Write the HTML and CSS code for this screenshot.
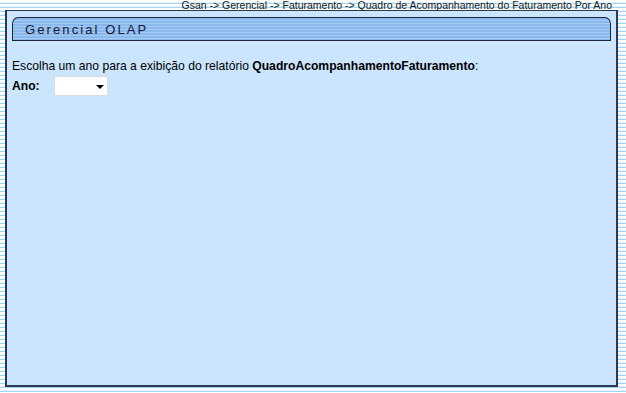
FILE: index.html
```html
<!DOCTYPE html>
<html lang="pt-BR">
<head>
    <meta charset="UTF-8">
    <title>Gerencial OLAP</title>
    <link rel="stylesheet" href="styles.css">
</head>
<body>
    <div class="breadcrumb">Gsan -&gt; Gerencial -&gt; Faturamento -&gt; Quadro de Acompanhamento do Faturamento Por Ano</div>

    <div class="panel">
        <div class="panel-title">Gerencial OLAP</div>

        <p class="intro">Escolha um ano para a exibição do relatório <strong>QuadroAcompanhamentoFaturamento</strong>:</p>

        <div class="form-row">
            <label for="ano">Ano:</label>
            <div class="select">
                <select id="ano">
                    <option value=""></option>
                </select>
                <span class="arrow"></span>
            </div>
        </div>
    </div>
</body>
</html>
```

FILE: styles.css
```css
:root {
    --panel-bg: #cbe5fe;
    --panel-border: #2b3a52;
    --text: #000000;
    --title-text: #14163a;
}

body {
    margin: 0;
    font-family: "Liberation Sans", Arial, sans-serif;
    font-size: 12.15px;
    color: var(--text);
    background: repeating-linear-gradient(
        to bottom,
        #ffffff 0,
        #ffffff 2px,
        #e4f3fb 2px,
        #e4f3fb 3px,
        #a3d6f2 3px,
        #a3d6f2 4px
    );
    height: 393px;
    overflow: hidden;
}

.breadcrumb {
    height: 10px;
    line-height: 10px;
    font-size: 10.5px;
    text-align: right;
    padding-right: 14px;
    color: #1a1a1a;
    white-space: nowrap;
}

.panel {
    box-sizing: border-box;
    margin: 0 8px 0 5px;
    height: 377px;
    border: 2px solid var(--panel-border);
    border-top-width: 1px;
    background: var(--panel-bg);
    padding: 6px 5px 0 5px;
}

.panel-title {
    height: 22px;
    line-height: 23px;
    border: 1px solid #1c2738;
    border-top-left-radius: 6px 7px;
    border-top-right-radius: 6px 7px;
    background: repeating-linear-gradient(
        to bottom,
        #88b8ec 0,
        #88b8ec 2px,
        #a6cbf3 2px,
        #a6cbf3 3px
    );
    padding-left: 12px;
    font-size: 13px;
    letter-spacing: 2.1px;
    color: var(--title-text);
}

.intro {
    margin: 18px 0 0 0;
    line-height: 14px;
}

.form-row {
    display: flex;
    align-items: center;
    margin-top: 3px;
}

.form-row label {
    font-weight: bold;
    width: 42px;
}

.select {
    position: relative;
    width: 54px;
    height: 20px;
}

.select select {
    width: 54px;
    height: 20px;
    border: 1px solid #d9dde3;
    background: #ffffff;
    appearance: none;
    -webkit-appearance: none;
    margin: 0;
    padding: 0;
}

.arrow {
    position: absolute;
    right: 4px;
    top: 9px;
    width: 0;
    height: 0;
    border-left: 4px solid transparent;
    border-right: 4px solid transparent;
    border-top: 4px solid #000000;
}
```
